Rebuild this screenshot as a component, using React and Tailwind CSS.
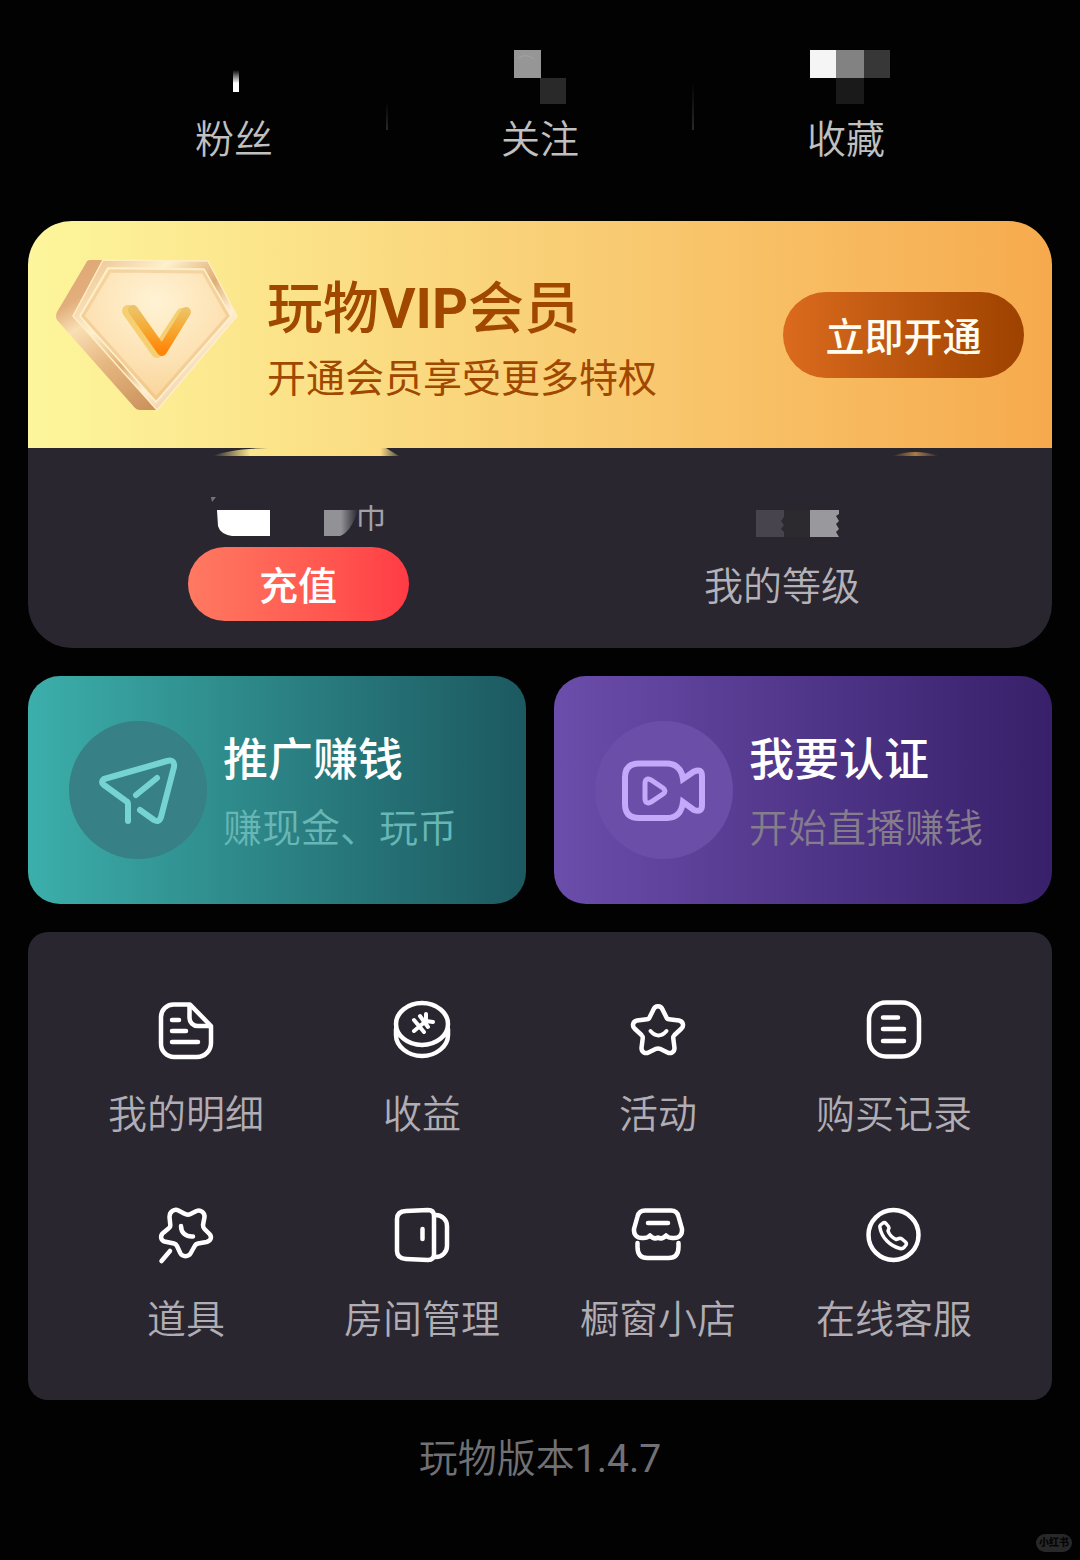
const stats = [
  {
    label: "粉丝",
    blocks: (
      <>
        <defs>
          <linearGradient id="fansFade" x1="0" y1="0" x2="0" y2="1">
            <stop offset="0" stopColor="#fff" stopOpacity="0" />
            <stop offset="0.6" stopColor="#fff" />
          </linearGradient>
        </defs>
        <rect x="54" y="21" width="6" height="22" fill="url(#fansFade)" />
      </>
    ),
  },
  {
    label: "关注",
    blocks: (
      <>
        <rect x="29" y="1" width="27" height="28" fill="#969696" />
        <path d="M33 9q8-5 16 1" stroke="#a3a3a3" fill="none" />
        <rect x="55" y="29" width="26" height="26" fill="#292929" />
      </>
    ),
  },
  {
    label: "收藏",
    blocks: (
      <>
        <rect x="19" y="1" width="26" height="28" fill="#f5f5f5" />
        <rect x="45" y="1" width="28" height="28" fill="#828282" />
        <rect x="73" y="1" width="26" height="28" fill="#373737" />
        <rect x="45" y="29" width="28" height="26" fill="#1a1a1a" />
      </>
    ),
  },
];

const menu = [
  {
    label: "我的明细",
    icon: (
      <>
        <path d="M55 26v17a14 14 0 0 1-14 14H18A13 13 0 0 1 5 44V17A12.500 12.500 0 0 1 17.500 4.500H34Z" />
        <path d="M33.500 6v12a8 8 0 0 0 8 8H54" />
        <path d="M16 20h7M16 31h14M16 42h26" />
      </>
    ),
  },
  {
    label: "收益",
    icon: (
      <>
        <ellipse cx="30" cy="24" rx="26" ry="21" />
        <path d="M4 29v6c0 11 11.600 21 26 21s26-10 26-21v-6" />
        <path d="M22 31L34 21M34 14v7l7 1M22 20l10 12M28 16l8 11" strokeWidth="4" />
      </>
    ),
  },
  {
    label: "活动",
    icon: (
      <>
        <path d="M25.500 9.500C27 5 33 5 34.500 9.500L38.500 17.500Q39 19 41 19.200L51 20.500C55.500 21.500 56 26 53.500 28.500L46.500 35Q45 36.500 45.300 38.500L46.500 48C46.500 52.500 42.500 54 39.500 52.500L32 48.800Q30 48 28 48.800L20.500 52.500C17.500 54 13.500 52.500 13.500 48L14.700 38.500Q15 36.500 13.500 35L6.500 28.500C4 26 4.500 21.500 9 20.500L19 19.200Q21 19 21.500 17.500Z" />
        <path d="M22.500 31Q30.500 40 38.500 31" strokeWidth="4" />
      </>
    ),
  },
  {
    label: "购买记录",
    icon: (
      <>
        <rect x="5" y="2.500" width="50" height="54" rx="17" />
        <path d="M19 17.500h15M19 29h21M19 41h21" />
      </>
    ),
  },
  {
    label: "道具",
    icon: (
      <>
        <path d="M28 8.500Q31.500 10.500 34.500 9L40.500 6C44.500 4.500 49 7.500 48.500 12L47 20Q47 22.500 48.500 24L53.500 29C56.500 32.500 54.500 36 50.500 37L42 38.500Q40 39 39 40.500L34.500 48.500C32.500 52 26.500 52 24.500 48.500L21 41Q20 39 18 38.500L8.500 36.500C5 35.500 4 31.500 6.500 28.500L12.500 23.500Q14.500 22 14.300 20L13.500 12C13.500 6.500 18.500 3.500 22.500 5.500Z" />
        <path d="M25 21C25 28 30 32 37 31.500M14 46L5.500 56" />
      </>
    ),
  },
  {
    label: "房间管理",
    icon: (
      <>
        <path d="M14 6L36 5Q42 5 42 11V49Q42 55 36 55L14 54Q5 53.500 5 46V14Q5 6.500 14 6Z" />
        <path d="M43 10h1a11 11 0 0 1 11 11v20a11 11 0 0 1-11 11h-1" />
        <path d="M30.500 24v10" />
      </>
    ),
  },
  {
    label: "橱窗小店",
    icon: (
      <>
        <path d="M17 5.500H43Q49 5.500 50.500 11.500L54 24C54.500 30 51 33 46 33Q41 33.500 38 30.500Q34 35 30 32.500Q26 35 22 30.500Q19 33.500 14 33C9 33 5.500 30 6 24L9.500 11.500Q11 5.500 17 5.500Z" />
        <path d="M9.500 38v4q0 11 10 11h21q10 0 10-11v-4M20 18h20" />
      </>
    ),
  },
  {
    label: "在线客服",
    icon: (
      <>
        <circle cx="29.500" cy="30" r="25" />
        <path
          d="M16.500 20L19 18Q20.500 17 22 18.500L24.500 21.500Q25.500 23 24.500 24.500L24 26Q26 31.500 32 34.500L35 33.500Q36.500 33 38 34L41.500 37Q43 38.500 42 40L40 42.500Q38.500 44 36 43.500C26 41 18 33 16 23Q15.500 21 16.500 20Z"
          strokeWidth="3.500"
        />
      </>
    ),
  },
];

function DiamondBadge() {
  return (
    <svg className="w-[186px] h-[156px] shrink-0" viewBox="0 0 186 156" strokeLinejoin="round" strokeLinecap="round">
      <defs>
        <linearGradient id="side" x1="0" y1="0" x2="0.6" y2="1">
          <stop offset="0" stopColor="#dda672" />
          <stop offset="0.25" stopColor="#e2ae7c" />
          <stop offset="0.4" stopColor="#f9dfb4" />
          <stop offset="0.65" stopColor="#e6b781" />
          <stop offset="1" stopColor="#cc925c" />
        </linearGradient>
        <linearGradient id="rim" x1="0" y1="0" x2="1" y2="1">
          <stop offset="0" stopColor="#e8bb84" />
          <stop offset="0.3" stopColor="#fff0cf" />
          <stop offset="0.5" stopColor="#dfae73" />
          <stop offset="0.65" stopColor="#fff0d8" />
          <stop offset="1" stopColor="#d39a5d" />
        </linearGradient>
        <radialGradient id="face" cx="0.5" cy="0.25" r="0.7">
          <stop offset="0" stopColor="#fff3d4" />
          <stop offset="0.6" stopColor="#fde3b6" />
          <stop offset="1" stopColor="#f9d69b" />
        </radialGradient>
        <linearGradient id="vee" x1="0" y1="0" x2="0" y2="1">
          <stop offset="0" stopColor="#ecc264" />
          <stop offset="0.5" stopColor="#f6a72f" />
          <stop offset="1" stopColor="#ff8508" />
        </linearGradient>
      </defs>
      <path d="M36 3H154L103 153H86Q83 153 81 151L3 63Q1 59 3 55L32 6Q33 3 36 3Z" fill="url(#side)" />
      <path d="M49 3L154 4L183 59L103 153L19 59Z" fill="url(#rim)" stroke="#ffeec0" strokeWidth="1.500" />
      <path d="M54 11L150 12L177 59L102 145L26 59Z" fill="url(#face)" stroke="#fff2c8" strokeWidth="1.500" />
      <path d="M56 14L149 15L174 59L102 141L29 59Z" fill="none" stroke="#e5b070" strokeOpacity="0.35" strokeWidth="3" />
      <path d="M74 54L103 95L128 57" fill="none" stroke="#f6cf73" strokeWidth="12" />
      <path d="M79 53L108 94L132 55" fill="none" stroke="url(#vee)" strokeWidth="10" />
    </svg>
  );
}

function Divider({ className }) {
  return <div className={`w-0.5 shrink-0 bg-linear-to-b from-transparent to-[#292929] ${className}`} />;
}

function Stat({ item }) {
  return (
    <div className="flex-1 flex flex-col items-center">
      <svg className="w-[110px] h-14" viewBox="0 0 110 56">
        {item.blocks}
      </svg>
      <span className="mt-1 text-[39px] leading-[62px] font-[350] text-[#c0c0c0]">{item.label}</span>
    </div>
  );
}

function PromoCard({ title, subtitle, cardClass, circleClass, subClass, children }) {
  return (
    <button
      type="button"
      className={`flex-1 min-w-0 h-[228px] pl-[41px] rounded-[32px] flex items-center gap-4 text-left bg-linear-to-r ${cardClass}`}
    >
      <span className={`size-[138px] shrink-0 rounded-full ${circleClass}`}>
        <svg viewBox="0 0 138 138" fill="none" strokeWidth="6" strokeLinecap="round" strokeLinejoin="round">
          {children}
        </svg>
      </span>
      <span className="pt-2.5 flex flex-col whitespace-nowrap leading-[68px]">
        <span className="text-[45px] font-medium text-white">{title}</span>
        <span className={`text-[39px] font-[350] ${subClass}`}>{subtitle}</span>
      </span>
    </button>
  );
}

export default function App() {
  return (
    <div className="min-h-screen flex flex-col bg-[#020202] px-7 font-['Roboto','Noto_Sans_CJK_SC',sans-serif]">
      {/* Stats */}
      <header className="flex px-[54px] pt-[49px] pb-[50px]">
        <Stat item={stats[0]} />
        <Divider className="h-7 mt-[53px]" />
        <Stat item={stats[1]} />
        <Divider className="h-12 mt-[33px]" />
        <Stat item={stats[2]} />
      </header>

      <main className="flex flex-col gap-7">
        {/* VIP + wallet */}
        <section className="rounded-[44px] overflow-hidden bg-[#2a2630]">
          <div className="h-[227px] pl-[26px] pr-7 flex items-center bg-linear-to-r from-[#fdf69c] via-[#f9d077] to-[#f6aa4d]">
            <DiamondBadge />
            <div className="pt-4 ml-[27px] flex-1 whitespace-nowrap text-[#a04800]">
              <h1 className="mb-1 text-[56px] leading-[68px] font-medium">
                玩物<span className="font-bold">VIP</span>会员
              </h1>
              <p className="text-[39px] leading-[64px]">开通会员享受更多特权</p>
            </div>
            <button
              type="button"
              className="w-[241px] h-[86px] pt-2 shrink-0 rounded-full bg-linear-to-r from-[#db6b1d] to-[#9e4200] text-[39px] font-medium text-[#fffdf0]"
            >
              立即开通
            </button>
          </div>

          <div className="h-[200px] px-7 flex">
            <div className="flex-1 flex flex-col items-center">
              <svg className="w-[320px] h-[99px]" viewBox="0 0 320 99">
                <defs>
                  <linearGradient id="smear" x1="0" x2="1">
                    <stop offset="0" stopColor="#fbe68b" stopOpacity="0" />
                    <stop offset="0.2" stopColor="#fbe68b" />
                    <stop offset="0.9" stopColor="#fbdc82" />
                    <stop offset="1" stopColor="#fbdc82" stopOpacity="0.2" />
                  </linearGradient>
                  <linearGradient id="coinFade" x1="0" x2="1">
                    <stop offset="0.5" stopColor="#929196" />
                    <stop offset="1" stopColor="#929196" stopOpacity="0" />
                  </linearGradient>
                </defs>
                <path d="M75 8Q92 1 130 0H248L261 8Z" fill="url(#smear)" />
                <path d="M73 49h5l-4 5Z" fill="#77757c" />
                <path d="M79 62H132V88H94Q82 86 80 78Z" fill="#fff" />
                <text x="233" y="80" textAnchor="middle" fontSize="34" fontWeight="350" fill="#a3a1a8">
                  币
                </text>
                <path d="M215 40h40v17h-40Z" fill="#2a2630" />
                <path d="M186 62H220Q213 84 202 88H186Z" fill="url(#coinFade)" />
              </svg>
              <button
                type="button"
                className="w-[221px] h-[74px] pt-1.5 rounded-full bg-linear-to-r from-[#ff7961] to-[#ff3b45] text-[39px] font-medium text-white"
              >
                充值
              </button>
            </div>
            <div className="flex-1 flex flex-col items-center">
              <svg className="w-[320px] h-[99px]" viewBox="0 0 320 99">
                <defs>
                  <linearGradient id="glow" x1="0" x2="1">
                    <stop offset="0" stopColor="#a87d45" stopOpacity="0" />
                    <stop offset="0.5" stopColor="#a87d45" />
                    <stop offset="1" stopColor="#a87d45" stopOpacity="0" />
                  </linearGradient>
                </defs>
                <path d="M270 8Q293 0 317 8Z" fill="url(#glow)" />
                <rect x="134" y="62" width="28" height="27" fill="#47444d" />
                <path d="M162 62h26v27h-26v-5l-3-3 3-4-3-4 3-4Z" fill="#2d2a2f" />
                <path d="M188 62h29v4l-3 2 3 5-3 3 3 5-3 3 3 5h-29Z" fill="#99989d" />
              </svg>
              <span className="text-[39px] leading-[80px] font-[350] text-[#b4b2b8]">我的等级</span>
            </div>
          </div>
        </section>

        {/* Promo cards */}
        <section className="flex gap-7">
          <PromoCard
            title="推广赚钱"
            subtitle="赚现金、玩币"
            cardClass="from-[#3cafab] to-[#1c5960]"
            circleClass="bg-[#378085]"
            subClass="text-[#68b6b5]"
          >
            <g stroke="#75d3d1">
              <path d="M59 100V83Q59 81 57 80L35 64Q31 61 35 58L98 40Q106 38 105 46L92 96Q90 102 85 99L71 89" />
              <path d="M67 74L88 57" />
            </g>
          </PromoCard>
          <PromoCard
            title="我要认证"
            subtitle="开始直播赚钱"
            cardClass="from-[#6b4dab] to-[#38206a]"
            circleClass="bg-[#6b4ea8]"
            subClass="text-[#857c8c]"
          >
            <g stroke="#c4a8fa" strokeLinejoin="miter">
              <path d="M44 42.500H72Q86 43 88 58L99 50.500Q107 47 107 55V84Q107 92 99 89L88 81Q86 97 72 97H44Q30 97 30 83V56.500Q30 42.500 44 42.500Z" />
              <path d="M50 63Q50 56 56 59L68 67Q72 70 68 73L56 81Q50 84 50 77Z" strokeWidth="5" />
            </g>
          </PromoCard>
        </section>

        {/* Menu grid */}
        <nav className="grid grid-cols-4 gap-y-[62px] px-10 pt-[68px] pb-[52px] rounded-[20px] bg-[#2a2630]">
          {menu.map((item) => (
            <button key={item.label} type="button" className="flex flex-col items-center gap-[27px]">
              <svg
                className="size-[60px]"
                viewBox="0 0 60 60"
                fill="none"
                stroke="#fff"
                strokeWidth="4.500"
                strokeLinecap="round"
                strokeLinejoin="round"
              >
                {item.icon}
              </svg>
              <span className="text-[39px] leading-[56px] font-[350] whitespace-nowrap text-[#b0aeb4]">
                {item.label}
              </span>
            </button>
          ))}
        </nav>
      </main>

      <footer className="flex-1 flex flex-col -mr-5">
        <p className="mt-7 mr-5 text-center text-[39px] leading-[62px] font-[350] text-[#717175]">
          玩物版本<span className="font-normal">1.4.7</span>
        </p>
        <span className="mt-auto mb-2 self-end w-9 h-[18px] rounded-full bg-[#282828] text-center text-[10px] leading-[18px] font-black text-[#050505]">
          小红书
        </span>
      </footer>
    </div>
  );
}
